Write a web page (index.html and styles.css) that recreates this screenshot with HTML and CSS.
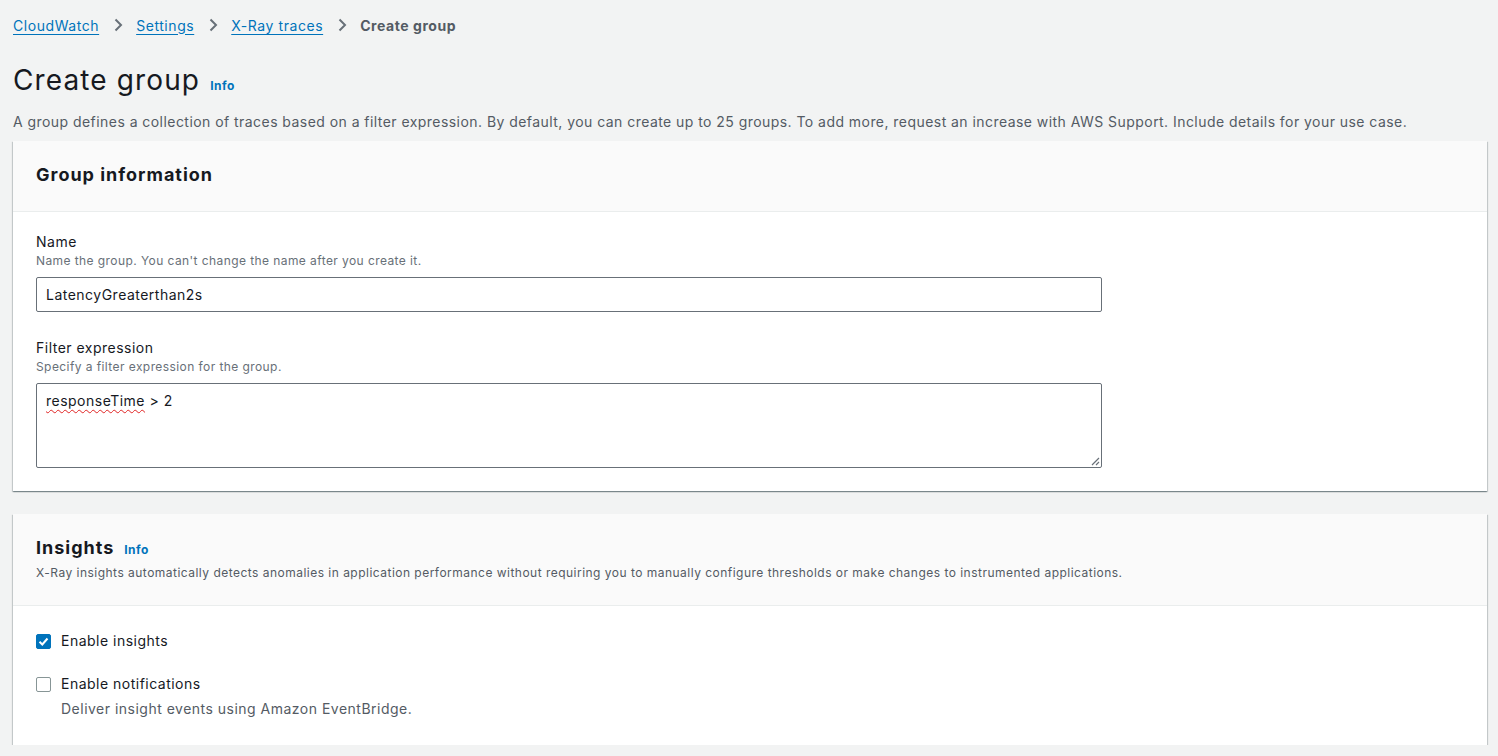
FILE: index.html
```html
<!DOCTYPE html>
<html lang="en">
<head>
<meta charset="utf-8">
<title>Create group</title>
<link rel="stylesheet" href="styles.css">
</head>
<body>
<div class="page">
  <nav class="crumbs">
    <a class="crumb-link" href="#">CloudWatch</a>
    <span class="crumb-sep"><svg width="16" height="16" viewBox="0 0 16 16"><path d="M5.5 2.5 L11 8 L5.5 13.5" fill="none" stroke="#687078" stroke-width="2"/></svg></span>
    <a class="crumb-link" href="#">Settings</a>
    <span class="crumb-sep"><svg width="16" height="16" viewBox="0 0 16 16"><path d="M5.5 2.5 L11 8 L5.5 13.5" fill="none" stroke="#687078" stroke-width="2"/></svg></span>
    <a class="crumb-link" href="#">X-Ray traces</a>
    <span class="crumb-sep"><svg width="16" height="16" viewBox="0 0 16 16"><path d="M5.5 2.5 L11 8 L5.5 13.5" fill="none" stroke="#687078" stroke-width="2"/></svg></span>
    <span class="crumb-current">Create group</span>
  </nav>

  <div class="page-head">
    <h1 class="page-title">Create group</h1>
    <a class="info" href="#">Info</a>
  </div>
  <p class="page-desc">A group defines a collection of traces based on a filter expression. By default, you can create up to 25 groups. To add more, request an increase with AWS Support. Include details for your use case.</p>

  <section class="card">
    <div class="card-header">
      <h2 class="card-title">Group information</h2>
    </div>
    <div class="card-body">
      <div class="field">
        <div class="field-label">Name</div>
        <div class="field-desc">Name the group. You can't change the name after you create it.</div>
        <div class="input">LatencyGreaterthan2s</div>
      </div>
      <div class="field">
        <div class="field-label">Filter expression</div>
        <div class="field-desc">Specify a filter expression for the group.</div>
        <div class="textarea"><span class="misspelled">responseTime</span> &gt; 2
          <svg class="grip" width="10" height="10" viewBox="0 0 10 10"><path d="M9 2 L2 9 M9 6 L6 9" stroke="#687078" stroke-width="1.2" fill="none"/></svg>
        </div>
      </div>
    </div>
  </section>

  <section class="card card-insights">
    <div class="card-header header-tall">
      <div class="title-row">
        <h2 class="card-title">Insights</h2>
        <a class="info" href="#">Info</a>
      </div>
      <div class="card-desc">X-Ray insights automatically detects anomalies in application performance without requiring you to manually configure thresholds or make changes to instrumented applications.</div>
    </div>
    <div class="card-body body-checks">
      <label class="check">
        <span class="box checked"><svg width="13" height="13" viewBox="0 0 13 13"><path d="M2.5 6.8 L5.3 9.5 L10.5 3.5" fill="none" stroke="#fff" stroke-width="2"/></svg></span>
        <span class="check-text">
          <span class="check-label">Enable insights</span>
        </span>
      </label>
      <label class="check">
        <span class="box"></span>
        <span class="check-text">
          <span class="check-label">Enable notifications</span>
          <span class="check-desc">Deliver insight events using Amazon EventBridge.</span>
        </span>
      </label>
    </div>
  </section>
</div>
</body>
</html>
```

FILE: styles.css
```css
* { box-sizing: border-box; }
html, body { margin: 0; padding: 0; }
body {
  background: #f2f3f3;
  font-family: Inter, "Open Sans", "Liberation Sans", Arial, sans-serif;
  color: #16191f;
  font-size: 14px;
  letter-spacing: 0.035em;
}
.page {
  padding: 13px 11px 0 13px;
}
.crumbs {
  display: flex;
  align-items: center;
  height: 24px;
  font-size: 14px;
}
.crumb-link {
  color: #0073bb;
  text-decoration: underline;
  text-underline-offset: 3px;
  letter-spacing: 0.04em;
}
.crumb-sep {
  display: flex;
  align-items: center;
  margin: 0 10px 0 11px;
}
.crumb-current {
  color: #545b64;
  font-weight: 700;
  letter-spacing: 0.04em;
}
.page-head {
  display: flex;
  align-items: baseline;
  margin-top: 21px;
}
.page-title {
  margin: 0;
  font-size: 28px;
  font-weight: 400;
  line-height: 44px;
  color: #16191f;
  letter-spacing: 0.04em;
}
.info {
  color: #0073bb;
  font-size: 12px;
  font-weight: 700;
  text-decoration: none;
  margin-left: 10px;
}
.page-desc {
  margin: 10px 0 0;
  color: #545b64;
  font-size: 14px;
  line-height: 20px;
  letter-spacing: 0.032em;
}
.card {
  background: #fff;
  margin-top: 9px;
  box-shadow: 0 1px 1px 0 rgba(0,28,36,.3), 1px 1px 1px 0 rgba(0,28,36,.15), -1px 1px 1px 0 rgba(0,28,36,.15);
}
.card-insights { margin-top: 23px; }
.card-header {
  background: #fafafa;
  border-bottom: 1px solid #eaeded;
  padding: 21px 23px 20px;
  height: 71px;
}
.header-tall { height: 92px; padding-top: 21px; }
.title-row { display: flex; align-items: baseline; }
.card-title {
  margin: 0;
  font-size: 18px;
  font-weight: 700;
  line-height: 26px;
  color: #16191f;
  letter-spacing: 0.055em;
}
.card-desc {
  color: #545b64;
  font-size: 12px;
  line-height: 16px;
  margin-top: 4px;
  letter-spacing: 0.04em;
}
.card-body {
  padding: 19px 23px 23px;
}
.field + .field { margin-top: 25px; }
.field-label {
  font-size: 14px;
  line-height: 22px;
  color: #16191f;
}
.field-desc {
  font-size: 12px;
  line-height: 16px;
  color: #687078;
  margin-bottom: 8px;
  letter-spacing: 0.035em;
}
.input, .textarea {
  max-width: 1066px;
  border: 1px solid #687078;
  border-radius: 2px;
  background: #fff;
  font-size: 14px;
  color: #16191f;
  padding: 6px 9px;
  line-height: 22px;
}
.input { height: 35px; }
.textarea {
  height: 85px;
  position: relative;
}
.misspelled {
  text-decoration: underline wavy #e02424;
  text-decoration-thickness: 1px;
  text-underline-offset: 3px;
}
.grip {
  position: absolute;
  right: 1px;
  bottom: 1px;
}
.body-checks {
  padding: 24px 23px 25px;
  display: flex;
  flex-direction: column;
  gap: 21px;
}
.check {
  display: flex;
  align-items: flex-start;
  gap: 10px;
}
.box {
  width: 15px;
  height: 15px;
  border: 1px solid #879596;
  border-radius: 2px;
  background: #fff;
  margin-top: 4px;
  flex: none;
  display: flex;
  align-items: center;
  justify-content: center;
}
.box.checked {
  background: #0073bb;
  border-color: #0073bb;
}
.check-text { display: flex; flex-direction: column; }
.check-label {
  font-size: 14px;
  line-height: 22px;
  color: #16191f;
}
.check-desc {
  font-size: 14px;
  line-height: 22px;
  color: #545b64;
  margin-top: 3px;
}
```
